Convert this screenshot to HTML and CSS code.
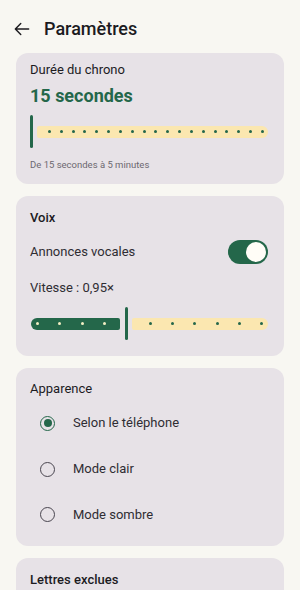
FILE: index.html
```html
<!DOCTYPE html>
<html lang="fr">
    <head>
        <meta charset="utf-8">
        <link rel="stylesheet" href="styles.css">
    </head>
    <body>
        <div class="screen">
            <header class="topbar">
                <svg class="back" viewBox="0 0 24 24" width="20" height="20">
                    <path d="M20 12H4.5M10.5 5.5L4 12l6.5 6.5" fill="none" stroke="#1c1b1f" stroke-width="1.7" stroke-linecap="round" stroke-linejoin="round"/>
                </svg>
                <h1 class="title">Paramètres</h1>
            </header>

            <main class="content">
                <section class="card first">
                    <div class="card-title">Durée du chrono</div>
                    <div class="value">15 secondes</div>
                    <div class="slider">
                        <div class="thumb"></div>
                        <div class="track inactive long">
                            <span></span><span></span><span></span><span></span><span></span>
                            <span></span><span></span><span></span><span></span><span></span>
                            <span></span><span></span><span></span><span></span><span></span>
                            <span></span><span></span><span></span><span></span>
                        </div>
                    </div>
                    <div class="caption">De 15 secondes à 5 minutes</div>
                </section>

                <section class="card">
                    <div class="card-title strong">Voix</div>
                    <div class="row">
                        <span class="label">Annonces vocales</span>
                        <div class="switch on"><div class="knob"></div></div>
                    </div>
                    <div class="label speed">Vitesse : 0,95×</div>
                    <div class="slider">
                        <div class="track active">
                            <span></span><span></span><span></span><span></span>
                        </div>
                        <div class="thumb"></div>
                        <div class="track inactive short">
                            <span></span><span></span><span></span>
                            <span></span><span></span><span></span>
                        </div>
                    </div>
                </section>

                <section class="card appearance">
                    <div class="card-title">Apparence</div>
                    <div class="options">
                        <div class="option">
                            <span class="radio checked"></span>
                            <span class="label">Selon le téléphone</span>
                        </div>
                        <div class="option">
                            <span class="radio"></span>
                            <span class="label">Mode clair</span>
                        </div>
                        <div class="option">
                            <span class="radio"></span>
                            <span class="label">Mode sombre</span>
                        </div>
                    </div>
                </section>

                <section class="card">
                    <div class="card-title strong">Lettres exclues</div>
                </section>
            </main>
        </div>
    </body>
</html>
```

FILE: styles.css
```css
html,
body {
    margin: 0;
    padding: 0;
    background-color: #f8f7f2;
}
body {
    font-family: Roboto, "Noto Sans", sans-serif;
    color: #1c1b1f;
}
.screen {
    width: 300px;
    height: 590px;
    overflow: hidden;
}
.topbar {
    height: 53px;
    display: flex;
    align-items: center;
    padding-left: 12px;
    padding-top: 4px;
    gap: 12px;
    box-sizing: border-box;
}
.back {
    display: block;
    flex-shrink: 0;
}
.title {
    margin: 0;
    font-size: 18px;
    font-weight: 500;
    line-height: 24px;
}
.content {
    display: flex;
    flex-direction: column;
    gap: 12px;
    padding: 0 16px;
}
.card {
    background-color: #e7e2e7;
    border-radius: 12px;
    padding: 13px 16px 16px 14px;
}
.card.first {
    padding-top: 8px;
    padding-bottom: 12px;
}
.card-title {
    font-size: 13px;
    line-height: 18px;
    font-weight: 400;
    color: #1c1b1f;
}
.card-title.strong {
    font-weight: 500;
}
.value {
    margin-top: 5px;
    font-size: 18px;
    line-height: 24px;
    font-weight: 700;
    color: #24674a;
}
.caption {
    margin-top: 10px;
    font-size: 9.5px;
    line-height: 14px;
    color: #6c6870;
}
.label {
    font-size: 13px;
    line-height: 18px;
    color: #2f2d33;
}

/* sliders */
.slider {
    display: flex;
    align-items: center;
    height: 33px;
    margin-top: 7px;
}
.thumb {
    width: 3px;
    height: 33px;
    border-radius: 2px;
    background-color: #24674a;
    flex-shrink: 0;
}
.track {
    height: 12px;
    display: flex;
    align-items: center;
    justify-content: space-between;
    box-sizing: border-box;
}
.track span {
    width: 3px;
    height: 3px;
    border-radius: 50%;
    background-color: #24674a;
}
.track.inactive {
    background-color: #fbe7b0;
    border-radius: 2px 6px 6px 2px;
    flex: 1;
    margin-left: 4px;
}
.track.long {
    padding: 0 4px 0 11px;
}
.track.short {
    padding: 0 5px 0 17px;
}
.track.active {
    width: 89px;
    background-color: #24674a;
    border-radius: 6px 2px 2px 6px;
    padding: 0 14px 0 5px;
    margin-right: 5px;
    margin-left: 1px;
}
.track.active span {
    background-color: #f3efc4;
}

/* voice */
.row {
    display: flex;
    align-items: center;
    justify-content: space-between;
    margin-top: 13px;
}
.switch {
    width: 40px;
    height: 24px;
    border-radius: 12px;
    background-color: #24674a;
    display: flex;
    align-items: center;
    justify-content: flex-end;
    padding: 0 2px;
    box-sizing: border-box;
}
.knob {
    width: 20px;
    height: 20px;
    border-radius: 50%;
    background-color: #fffdf7;
}
.label.speed {
    display: block;
    margin-top: 15px;
}
.speed + .slider {
    margin-top: 10px;
}

/* appearance */
.card.appearance {
    padding-top: 12px;
    padding-bottom: 9px;
}
.options {
    margin-top: 2px;
}
.option {
    height: 46px;
    display: flex;
    align-items: center;
    gap: 18px;
    padding-left: 10px;
}
.option:last-child {
    height: 45px;
}
.radio {
    width: 15px;
    height: 15px;
    border: 1.5px solid #49454f;
    border-radius: 50%;
    box-sizing: border-box;
    display: flex;
    align-items: center;
    justify-content: center;
    flex-shrink: 0;
}
.radio.checked {
    border-color: #24674a;
}
.radio.checked::after {
    content: "";
    width: 8px;
    height: 8px;
    border-radius: 50%;
    background-color: #24674a;
}
```
